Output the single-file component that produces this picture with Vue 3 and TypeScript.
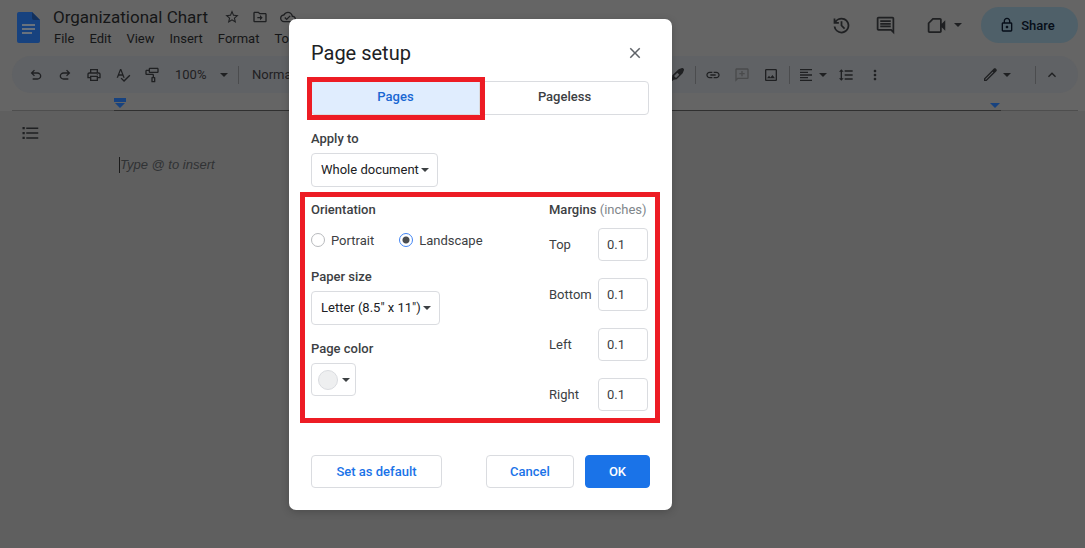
<script setup lang="ts">
import { ref } from 'vue'

interface Glyph {
  box: string
  d: string
}

const m = (d: string): Glyph => ({ box: '0 0 24 24', d })
const s = (d: string): Glyph => ({ box: '0 -960 960 960', d })

const glyphs: Record<string, Glyph> = {
  star: m('M22 9.24l-7.19-.62L12 2 9.19 8.63 2 9.24l5.46 4.73L5.82 21 12 17.27 18.18 21l-1.63-7.03L22 9.24zM12 15.4l-3.76 2.27 1-4.28-3.32-2.88 4.38-.38L12 6.1l1.71 4.04 4.38.38-3.32 2.88 1 4.28L12 15.4z'),
  move: m('M20 6h-8l-2-2H4c-1.1 0-2 .9-2 2v12c0 1.1.9 2 2 2h16c1.1 0 2-.9 2-2V8c0-1.1-.9-2-2-2zm0 12H4V6h5.17l2 2H20v10zm-8-1l4-4-4-4v3H8v2h4v3z'),
  cloud: m('M19.35 10.04C18.67 6.59 15.64 4 12 4 9.11 4 6.6 5.64 5.35 8.04 2.34 8.36 0 10.91 0 14c0 3.31 2.69 6 6 6h13c2.76 0 5-2.24 5-5 0-2.64-2.05-4.78-4.65-4.96zM19 18H6c-2.21 0-4-1.79-4-4 0-2.05 1.53-3.76 3.56-3.97l1.07-.11.5-.95C8.08 7.14 9.94 6 12 6c2.62 0 4.88 1.86 5.39 4.43l.3 1.5 1.53.11c1.56.1 2.78 1.41 2.78 2.96 0 1.65-1.35 3-3 3zm-9-3.82l-2.09-2.09L6.5 13.5 10 17l6.01-6.01-1.41-1.41z'),
  history: s('M480-120q-138 0-240.5-91.5T122-440h82q14 104 92.5 172T480-200q117 0 198.5-81.5T760-480q0-117-81.5-198.5T480-760q-69 0-129 32t-101 88h110v80H120v-240h80v94q51-64 124.5-99T480-840q75 0 140.5 28.5t114 77q48.5 48.5 77 114T840-480q0 75-28.5 140.5t-77 114q-48.5 48.5-114 77T480-120Zm112-192L440-464v-216h80v184l128 128-56 56Z'),
  comment: m('M21.99 4c0-1.1-.89-2-1.99-2H4c-1.1 0-2 .9-2 2v12c0 1.1.9 2 2 2h14l4 4-.01-18zM20 4v13.17L18.83 16H4V4h16zM6 12h12v2H6v-2zm0-3h12v2H6V9zm0-3h12v2H6V6z'),
  meet: m('M7.500 3.500H16c1.100 0 2 .9 2 2V10l4-4v12l-4-4v4.500c0 1.100-.9 2-2 2H4c-1.100 0-2-.9-2-2V9zM8.300 5.500L4 9.800v8.700h12v-13z'),
  lock: m('M18 8h-1V6c0-2.76-2.24-5-5-5S7 3.24 7 6v2H6c-1.1 0-2 .9-2 2v10c0 1.1.9 2 2 2h12c1.1 0 2-.9 2-2V10c0-1.1-.9-2-2-2zM9 6c0-1.66 1.34-3 3-3s3 1.34 3 3v2H9V6zm9 14H6V10h12v10zm-6-3c1.1 0 2-.9 2-2s-.9-2-2-2-2 .9-2 2 .9 2 2 2z'),
  undo: s('M280-200v-80h284q63 0 109.5-40T720-420q0-60-46.5-100T564-560H312l104 104-56 56-200-200 200-200 56 56-104 104h252q97 0 166.5 63T800-420q0 94-69.5 157T564-200H280Z'),
  redo: s('M396-200q-97 0-166.5-63T160-420q0-94 69.5-157T396-640h252L544-744l56-56 200 200-200 200-56-56 104-104H396q-63 0-109.5 40T240-420q0 60 46.5 100T396-280h284v80H396Z'),
  print: m('M19 8h-1V3H6v5H5c-1.66 0-3 1.34-3 3v6h4v4h12v-4h4v-6c0-1.66-1.34-3-3-3zM8 5h8v3H8V5zm8 12v2H8v-4h8v2zm2-2v-2H6v2H4v-4c0-.55.45-1 1-1h14c.55 0 1 .45 1 1v4h-2zm0-4.5a1 1 0 1 1-2 0 1 1 0 0 1 2 0z'),
  spell: m('M12.45 16h2.09L9.43 3H7.57L2.46 16h2.09l1.12-3h5.64l1.14 3zm-6.02-5L8.5 5.48 10.57 11H6.43zm15.16.59l-8.09 8.09L9.83 16l-1.41 1.41 5.09 5.09L23 13l-1.41-1.41z'),
  paint: m('M9 1h11c1.100 0 2 .9 2 2v4c0 1.100-.9 2-2 2H9c-1.100 0-2-.9-2-2V6H4v4h9c1.100 0 2 .9 2 2v3h1c.6 0 1 .4 1 1v6c0 .6-.4 1-1 1h-4c-.6 0-1-.4-1-1v-6c0-.6.4-1 1-1h1v-3H4c-1.100 0-2-.9-2-2V6c0-1.100.9-2 2-2h3V3c0-1.100.9-2 2-2zm0 2v4h11V3zm4 14v4h2v-4z'),
  highlighter: m('M14.500 3.500l5-2c1.500-.5 3.500 1.500 3 3l-2 5-9 9-4.500.5-2 2H1l3.500-4 .5-4.500zM12.500 8.500l-5 5 3 3 5-5z'),
  link: m('M3.900 12c0-1.710 1.390-3.100 3.100-3.100h4V7H7c-2.760 0-5 2.240-5 5s2.240 5 5 5h4v-1.900H7c-1.710 0-3.100-1.390-3.100-3.100zM8 13h8v-2H8v2zm9-6h-4v1.900h4c1.710 0 3.100 1.390 3.100 3.100s-1.390 3.100-3.100 3.100h-4V17h4c2.760 0 5-2.240 5-5s-2.240-5-5-5z'),
  addComment: m('M2 4c0-1.100.9-2 2-2h16c1.100 0 2 .9 2 2v12c0 1.100-.9 2-2 2H6l-4 4zM4 4v13.200L5.200 16H20V4zm7 2h2v3h3v2h-3v3h-2v-3H8V9h3z'),
  image: m('M19 5v14H5V5h14m0-2H5c-1.100 0-2 .9-2 2v14c0 1.100.9 2 2 2h14c1.100 0 2-.9 2-2V5c0-1.100-.9-2-2-2zm-4.860 8.860l-3 3.870L9 13.140 6 17h12l-3.860-5.140z'),
  align: m('M15 15H3v2h12v-2zm0-8H3v2h12V7zM3 13h18v-2H3v2zm0 8h18v-2H3v2zM3 3v2h18V3H3z'),
  spacing: m('M6 7h2.500L5 3.500 1.500 7H4v10H1.500L5 20.500 8.500 17H6V7zm4-2v2h12V5H10zm0 14h12v-2H10v2zm0-6h12v-2H10v2z'),
  more: m('M12 8c1.100 0 2-.9 2-2s-.9-2-2-2-2 .9-2 2 .9 2 2 2zm0 2c-1.100 0-2 .9-2 2s.9 2 2 2 2-.9 2-2-.9-2-2-2zm0 6c-1.100 0-2 .9-2 2s.9 2 2 2 2-.9 2-2-.9-2-2-2z'),
  pencil: m('M3 17.200L16 4.200l1.800-1.800c.8-.8 2-.8 2.800 0l1 1c.8.8.8 2 0 2.800L6.800 21H3zm2 .8v1h1L17 8l-1-1z'),
  chevron: m('M12 8l-6 6 1.410 1.410L12 10.830l4.590 4.580L18 14z'),
  outline: m('M2 4h3v3H2zm0 6.500h3v3H2zM2 17h3v3H2zM7 4.500h16v2H7zM7 11h16v2H7zM7 17.500h16v2H7z'),
  close: m('M19 6.410L17.590 5 12 10.590 6.410 5 5 6.410 10.590 12 5 17.590 6.410 19 12 13.410 17.590 19 19 17.590 13.410 12z'),
}

const menus = ['File', 'Edit', 'View', 'Insert', 'Format', 'Tools']
const titleActions = [
  { icon: 'star', label: 'Star' },
  { icon: 'move', label: 'Move' },
  { icon: 'cloud', label: 'Document status' },
]
const editTools = [
  { icon: 'undo', label: 'Undo' },
  { icon: 'redo', label: 'Redo' },
  { icon: 'print', label: 'Print' },
  { icon: 'spell', label: 'Spelling' },
  { icon: 'paint', label: 'Paint format' },
]
const insertTools = [
  { icon: 'link', label: 'Insert link', faded: false },
  { icon: 'addComment', label: 'Add comment', faded: true },
  { icon: 'image', label: 'Insert image', faded: false },
]

const tab = ref<'pages' | 'pageless'>('pages')
const applyTo = ref('Whole document')
const orientation = ref('Landscape')
const paper = ref('Letter (8.5" x 11")')
const margins = ref([
  { name: 'Top', value: '0.1' },
  { name: 'Bottom', value: '0.1' },
  { name: 'Left', value: '0.1' },
  { name: 'Right', value: '0.1' },
])
</script>

<template>
  <div class="app">
    <header class="header">
      <svg class="logo" viewBox="0 0 23 31" aria-hidden="true">
        <path class="logo-page" d="M2 0h13l8 8v21a2 2 0 0 1-2 2H2a2 2 0 0 1-2-2V2a2 2 0 0 1 2-2z" />
        <path class="logo-fold" d="M15 0l8 8h-6a2 2 0 0 1-2-2z" />
        <path class="logo-lines" d="M5 12h13v2H5zM5 16h13v2H5zM5 20h10v2H5z" />
      </svg>
      <div class="titles">
        <div class="title-row">
          <h1 class="doc-title">Organizational Chart</h1>
          <button v-for="a in titleActions" :key="a.icon" class="icon-btn small" :aria-label="a.label">
            <svg class="i16" :viewBox="glyphs[a.icon].box"><path :d="glyphs[a.icon].d" /></svg>
          </button>
        </div>
        <nav class="menus">
          <button v-for="name in menus" :key="name" class="menu">{{ name }}</button>
        </nav>
      </div>
      <div class="header-actions">
        <button class="icon-btn wide" aria-label="Version history">
          <svg class="i22" :viewBox="glyphs.history.box"><path :d="glyphs.history.d" /></svg>
        </button>
        <button class="icon-btn wide" aria-label="Comments">
          <svg class="i22" :viewBox="glyphs.comment.box"><path :d="glyphs.comment.d" /></svg>
        </button>
        <button class="icon-btn meet" aria-label="Join a call">
          <svg class="i22" :viewBox="glyphs.meet.box"><path :d="glyphs.meet.d" /></svg>
          <span class="caret"></span>
        </button>
        <button class="share">
          <svg class="i16" :viewBox="glyphs.lock.box"><path :d="glyphs.lock.d" /></svg>
          Share
        </button>
      </div>
    </header>

    <div class="toolbar" role="toolbar" aria-label="Formatting">
      <button v-for="t in editTools" :key="t.icon" class="icon-btn" :aria-label="t.label">
        <svg class="i16" :viewBox="glyphs[t.icon].box"><path :d="glyphs[t.icon].d" /></svg>
      </button>
      <button class="text-btn zoom">100% <span class="caret"></span></button>
      <span class="rule"></span>
      <button class="text-btn style">Normal text</button>
      <button class="icon-btn" aria-label="Highlight color">
        <svg class="i16" :viewBox="glyphs.highlighter.box"><path :d="glyphs.highlighter.d" /></svg>
      </button>
      <span class="rule near"></span>
      <button v-for="t in insertTools" :key="t.icon" class="icon-btn" :class="{ faded: t.faded }" :aria-label="t.label">
        <svg class="i16" :viewBox="glyphs[t.icon].box"><path :d="glyphs[t.icon].d" /></svg>
      </button>
      <span class="rule near"></span>
      <button class="icon-btn pair" aria-label="Align">
        <svg class="i16" :viewBox="glyphs.align.box"><path :d="glyphs.align.d" /></svg>
        <span class="caret"></span>
      </button>
      <button class="icon-btn" aria-label="Line spacing">
        <svg class="i16" :viewBox="glyphs.spacing.box"><path :d="glyphs.spacing.d" /></svg>
      </button>
      <button class="icon-btn" aria-label="More">
        <svg class="i16" :viewBox="glyphs.more.box"><path :d="glyphs.more.d" /></svg>
      </button>
      <button class="icon-btn pair mode" aria-label="Editing mode">
        <svg class="i16" :viewBox="glyphs.pencil.box"><path :d="glyphs.pencil.d" /></svg>
        <span class="caret"></span>
      </button>
      <span class="rule"></span>
      <button class="icon-btn" aria-label="Hide the menus">
        <svg class="i16" :viewBox="glyphs.chevron.box"><path :d="glyphs.chevron.d" /></svg>
      </button>
    </div>

    <div class="ruler">
      <div class="ruler-text">
        <svg class="indent" viewBox="0 0 12 10" aria-hidden="true"><path d="M0 0h12v4H0zM1 5h10L6 10z" /></svg>
        <svg class="indent" viewBox="0 0 12 10" aria-hidden="true"><path d="M1 5h10L6 10z" /></svg>
      </div>
    </div>

    <main class="page">
      <button class="icon-btn" aria-label="Show document outline">
        <svg class="i18" :viewBox="glyphs.outline.box"><path :d="glyphs.outline.d" /></svg>
      </button>
      <p class="prompt">Type @ to insert</p>
    </main>

    <div class="overlay">
      <section class="dialog" role="dialog" aria-labelledby="dialog-title">
        <div class="dialog-head">
          <h2 id="dialog-title">Page setup</h2>
          <button class="icon-btn close" aria-label="Close">
            <svg class="i18" :viewBox="glyphs.close.box"><path :d="glyphs.close.d" /></svg>
          </button>
        </div>

        <div class="tabs" role="tablist">
          <button role="tab" class="tab marked" :class="{ active: tab === 'pages' }" :aria-selected="tab === 'pages'" @click="tab = 'pages'">Pages</button>
          <button role="tab" class="tab" :class="{ active: tab === 'pageless' }" :aria-selected="tab === 'pageless'" @click="tab = 'pageless'">Pageless</button>
        </div>

        <label class="label" for="apply-to">Apply to</label>
        <div class="select apply">
          <select id="apply-to" v-model="applyTo"><option>Whole document</option></select>
          <span class="caret"></span>
        </div>

        <div class="settings marked">
          <div class="col">
            <div id="orientation" class="label">Orientation</div>
            <div class="radios" role="radiogroup" aria-labelledby="orientation">
              <label v-for="o in ['Portrait', 'Landscape']" :key="o" class="radio">
                <input v-model="orientation" type="radio" name="orientation" :value="o" />{{ o }}
              </label>
            </div>
            <label class="label" for="paper">Paper size</label>
            <div class="select paper">
              <select id="paper" v-model="paper"><option>Letter (8.5" x 11")</option></select>
              <span class="caret"></span>
            </div>
            <div id="page-color" class="label">Page color</div>
            <button class="color" aria-labelledby="page-color"><span class="swatch"></span><span class="caret"></span></button>
          </div>
          <div class="margins">
            <div class="label">Margins <span class="unit">(inches)</span></div>
            <label v-for="row in margins" :key="row.name" class="margin">
              {{ row.name }}<input v-model="row.value" type="text" />
            </label>
          </div>
        </div>

        <footer class="actions">
          <button class="btn default">Set as default</button>
          <button class="btn cancel">Cancel</button>
          <button class="btn ok">OK</button>
        </footer>
      </section>
    </div>
  </div>
</template>

<style>
body {
  margin: 0;
}
</style>

<style scoped>
.app {
  position: relative;
  display: flex;
  flex-direction: column;
  min-height: 100vh;
  overflow: hidden;
  background: #656565;
  color: #151617;
  font-family: Roboto, "Liberation Sans", sans-serif;
  font-size: 13px;
}
.app * {
  box-sizing: border-box;
}
button,
input,
select {
  margin: 0;
  padding: 0;
  border: 0;
  background: none;
  color: inherit;
  font: inherit;
}
svg {
  display: block;
  flex: none;
  fill: currentColor;
}
.i16 { width: 16px; height: 16px; }
.i18 { width: 18px; height: 18px; }
.i22 { width: 21px; height: 21px; }
.caret {
  flex: none;
  width: 0;
  height: 0;
  border: 4px solid transparent;
  border-top-color: currentColor;
  border-bottom: 0;
}
.icon-btn {
  display: flex;
  flex: none;
  align-items: center;
  justify-content: center;
  width: 28px;
  height: 28px;
  color: #1f2022;
}

.header {
  display: flex;
  align-items: flex-start;
  height: 56px;
  padding: 7px 7px 0 17px;
}
.logo {
  width: 23px;
  height: 31px;
  margin-top: 5px;
}
.logo-page { fill: #17427f; }
.logo-fold { fill: #12305c; }
.logo-lines { fill: #69727d; }
.titles {
  margin-left: 13px;
}
.title-row {
  display: flex;
  align-items: center;
  height: 20px;
}
.doc-title {
  margin: 0 10px 0 0;
  font-size: 17px;
  font-weight: 400;
  white-space: nowrap;
}
.icon-btn.small {
  height: 20px;
}
.menus {
  display: flex;
  gap: 15px;
  margin-top: 2px;
  padding-left: 1px;
}
.menu {
  height: 18px;
}
.header-actions {
  display: flex;
  align-items: center;
  height: 36px;
  margin-left: auto;
}
.icon-btn.wide {
  width: 44px;
}
.icon-btn.meet {
  gap: 7px;
  width: 74px;
}
.share {
  display: flex;
  align-items: center;
  justify-content: center;
  gap: 6px;
  width: 97px;
  height: 36px;
  padding-right: 5px;
  border-radius: 18px;
  background: #4f6069;
  color: #060d18;
  font-size: 13px;
  font-weight: 500;
}

.toolbar {
  display: flex;
  align-items: center;
  gap: 1px;
  height: 37px;
  margin: 0 7px 0 12px;
  padding: 0 12px 0 10px;
  border-radius: 19px;
  background: #606265;
}
.text-btn {
  display: flex;
  align-items: center;
  justify-content: space-between;
  height: 28px;
  color: #1f2022;
  white-space: nowrap;
}
.zoom {
  width: 53px;
  margin-left: 8px;
}
.style {
  flex: none;
  width: 410px;
  margin-left: 11px;
}
.rule {
  flex: none;
  width: 1px;
  height: 18px;
  margin: 0 1px 0 9px;
  background: #4b4c4e;
}
.rule.near {
  margin: 0 2px 0 3px;
}
.faded {
  color: #4a4b4c;
}
.icon-btn.pair {
  gap: 5px;
  width: 38px;
}
.icon-btn.mode {
  margin-left: auto;
  margin-right: 10px;
}

.ruler {
  height: 18px;
  margin: 0 7px 0 12px;
  border-bottom: 1px solid #4e4e4e;
}
.ruler-text {
  display: flex;
  justify-content: space-between;
  align-items: flex-start;
  height: 18px;
  margin: 0 77px 0 102px;
  padding-top: 5px;
  border-bottom: 1px solid #303030;
}
.indent {
  width: 12px;
  height: 10px;
  fill: #17427f;
}

.page {
  display: flex;
  flex: 1;
  align-items: flex-start;
  padding: 8px 16px;
  background: #5f5f5f;
}
.prompt {
  margin: 38px 0 0 75px;
  border-left: 1px solid #1a1a1a;
  color: #303234;
  font-family: "Liberation Sans", Arial, sans-serif;
  font-size: 13px;
  font-style: italic;
  line-height: 16px;
}

.overlay {
  position: absolute;
  inset: 0;
  padding: 19px 16px 16px 289px;
}
.dialog {
  width: 383px;
  padding: 0 22px 22px;
  border-radius: 7px;
  background: #fff;
  box-shadow: 0 2px 8px rgba(0, 0, 0, 0.2);
  color: #3c4043;
}
.dialog-head {
  display: flex;
  align-items: center;
  justify-content: space-between;
  height: 62px;
  padding: 6px 1px 0 0;
}
.dialog-head h2 {
  margin: 0;
  color: #202124;
  font-size: 20px;
  font-weight: 400;
}
.icon-btn.close {
  color: #5f6368;
}
.tabs {
  display: flex;
  height: 34px;
  margin-right: 1px;
}
.tab {
  flex: 1;
  padding-bottom: 3px;
  border: 1px solid #dadce0;
  border-radius: 0 4px 4px 0;
  font-weight: 500;
}
.tab.active {
  border-radius: 4px 0 0 4px;
  background: #e0edfe;
  color: #1967d2;
}
.marked {
  position: relative;
  z-index: 1;
}
.marked::after {
  content: "";
  position: absolute;
  border: 5px solid #ed1c24;
  pointer-events: none;
}
.tab.marked::after {
  inset: -5px -6px -6px -5px;
}
.label {
  display: block;
  height: 18px;
  font-weight: 500;
  line-height: 18px;
}
.tabs + .label {
  margin-top: 15px;
}
.select {
  position: relative;
  height: 34px;
}
.select select {
  width: 100%;
  height: 34px;
  padding: 0 9px 1px;
  border: 1px solid #dadce0;
  border-radius: 4px;
  appearance: none;
  color: #202124;
}
.select .caret {
  position: absolute;
  top: 15px;
  right: 9px;
}
.apply {
  width: 127px;
  margin-top: 5px;
}
.paper {
  width: 129px;
  margin: 5px 0 15px;
}
.settings {
  display: flex;
  justify-content: space-between;
  margin: 14px 2px 0 0;
}
.settings.marked::after {
  inset: -9px -12px -12px -11px;
}
.radios {
  display: flex;
  gap: 25px;
  height: 18px;
  margin: 12px 0 19px;
}
.radio {
  display: flex;
  align-items: center;
  gap: 6px;
}
.radio input {
  width: 14px;
  height: 14px;
  border: 1px solid #b8babd;
  border-radius: 50%;
  appearance: none;
}
.radio input:checked {
  border-color: #4285f4;
  background: radial-gradient(circle, #4a4d51 3px, transparent 4px);
}
.color {
  display: flex;
  align-items: center;
  justify-content: center;
  gap: 4px;
  width: 45px;
  height: 33px;
  margin-top: 5px;
  border: 1px solid #dadce0;
  border-radius: 4px;
}
.swatch {
  width: 20px;
  height: 20px;
  border: 1px solid #dadce0;
  border-radius: 50%;
  background: #eeeff0;
}
.margins {
  display: flex;
  flex-direction: column;
  width: 99px;
}
.unit {
  color: #80868b;
  font-weight: 400;
}
.margin {
  display: flex;
  align-items: center;
  justify-content: space-between;
  height: 33px;
  margin-bottom: 17px;
}
.margin:last-child {
  margin-bottom: 0;
}
.margins .label {
  margin-bottom: 9px;
}
.margin input {
  width: 50px;
  height: 33px;
  padding: 0 8px;
  border: 1px solid #dadce0;
  border-radius: 4px;
}
.actions {
  display: flex;
  gap: 11px;
  margin-top: 44px;
}
.btn {
  height: 33px;
  border: 1px solid #dadce0;
  border-radius: 4px;
  color: #1a73e8;
  font-weight: 500;
}
.default {
  width: 131px;
  margin-right: auto;
}
.cancel {
  width: 88px;
}
.ok {
  width: 65px;
  border-color: #1a73e8;
  background: #1a73e8;
  color: #fff;
}
</style>
